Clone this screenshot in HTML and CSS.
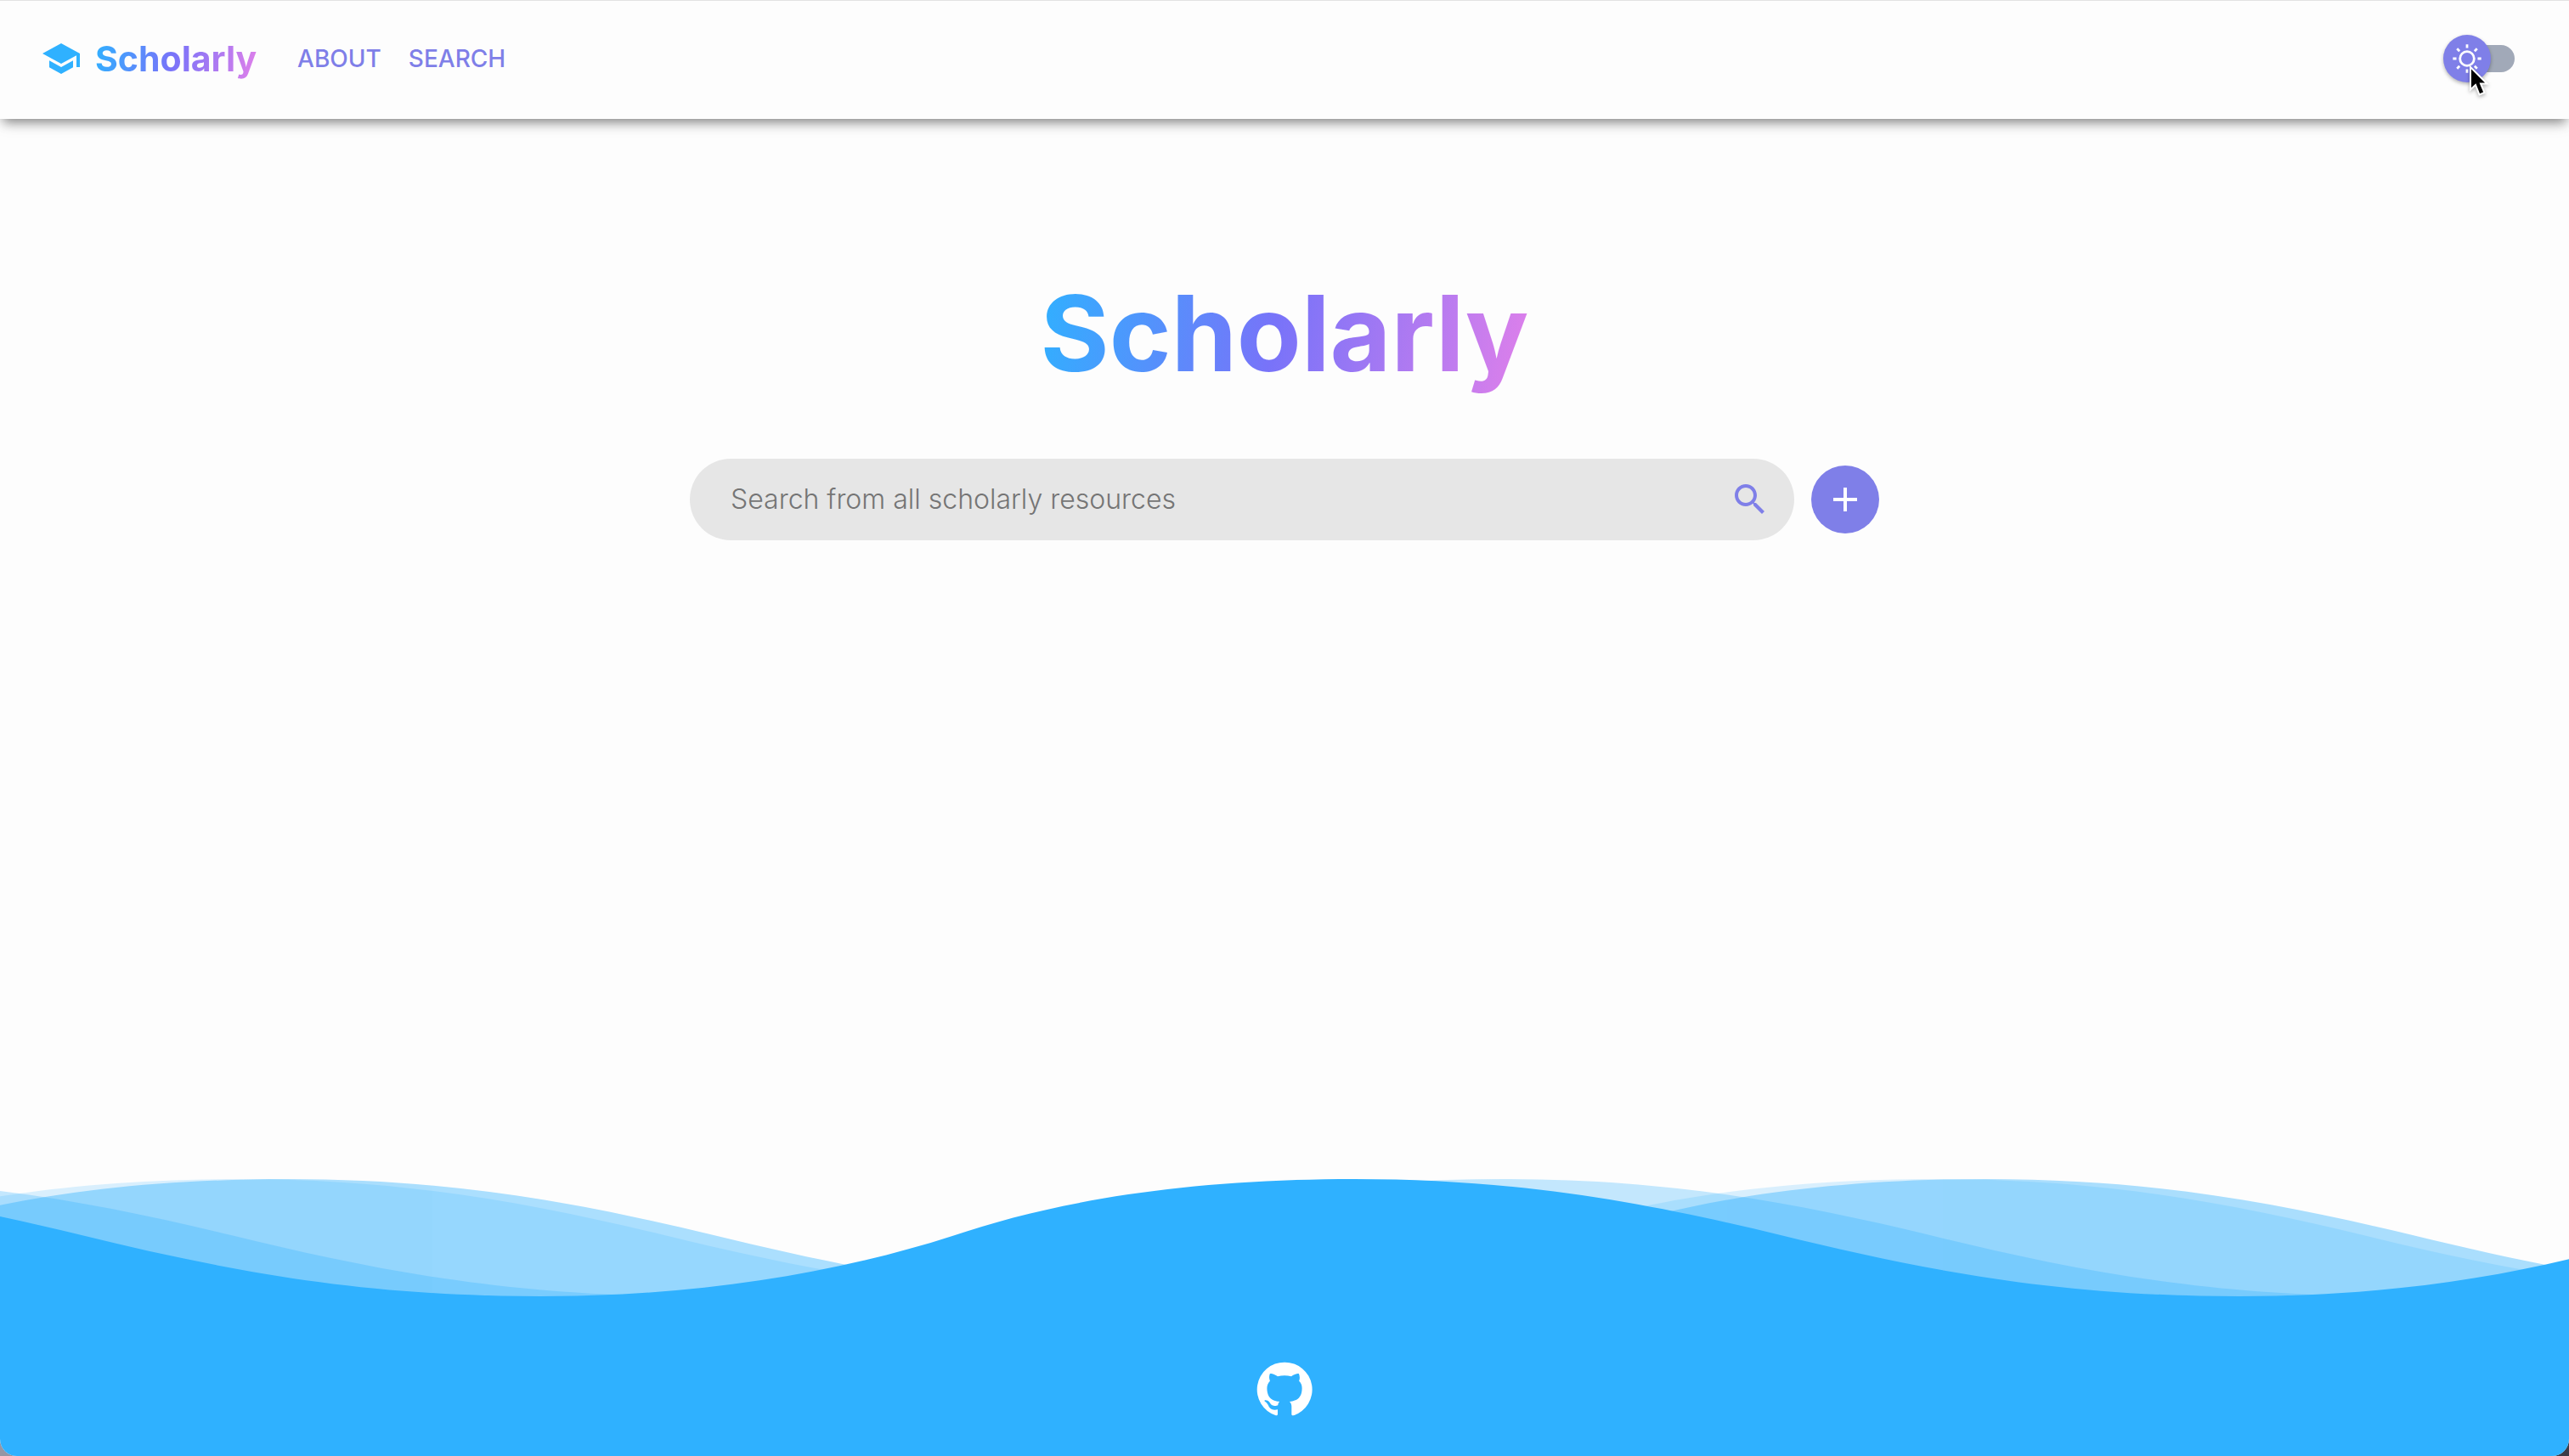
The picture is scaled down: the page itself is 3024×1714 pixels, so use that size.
FILE: index.html
```html
<!DOCTYPE html>
<html lang="en">
<head>
  <meta charset="utf-8">
  <meta name="viewport" content="width=device-width, initial-scale=1">
  <title>Scholarly</title>
  <link rel="stylesheet" href="styles.css">
</head>
<body>
  <div class="page">
    <header class="header">
      <a class="brand" href="#">
        <svg class="icon" viewBox="0 0 24 24" aria-hidden="true"><path d="M5 13.18v4L12 21l7-3.82v-4L12 17l-7-3.82zM12 3L1 9l11 6 9-4.91V17h2V9L12 3z"/></svg>
        <span class="brand-name gradient-text">Scholarly</span>
      </a>
      <nav class="nav">
        <a href="#about">ABOUT</a>
        <a href="#search">SEARCH</a>
      </nav>
      <label class="theme-switch">
        <input class="theme-input" type="checkbox" role="switch" aria-label="Dark mode">
        <span class="theme-thumb">
          <svg class="sun" viewBox="0 0 20 20" aria-hidden="true"><path d="M9.305 1.667V3.75h1.389V1.667h-1.39zm-4.707 1.95l-.982.982L5.09 6.072l.982-.982-1.473-1.473zm10.802 0L13.927 5.09l.982.982 1.473-1.473-.982-.982zM10 5.139a4.872 4.872 0 00-4.862 4.86A4.872 4.872 0 0010 14.862 4.872 4.872 0 0014.86 10 4.872 4.872 0 0010 5.139zm0 1.389A3.462 3.462 0 0113.471 10a3.462 3.462 0 01-3.473 3.472A3.462 3.462 0 016.527 10 3.462 3.462 0 0110 6.528zM1.665 9.305v1.39h2.083v-1.39H1.666zm14.583 0v1.39h2.084v-1.39h-2.084zM5.09 13.928L3.616 15.4l.982.982 1.473-1.473-.982-.982zm9.82 0l-.982.982 1.473 1.473.982-.982-1.473-1.473zM9.305 16.25v2.083h1.389V16.25h-1.39z"/></svg>
        </span>
        <svg class="pointer" viewBox="0 0 24 38" aria-hidden="true"><path d="M2 2v26.500l6-5.500 4.500 11.500 6-2.500-4.500-10.500h7.500z"/></svg>
      </label>
    </header>

    <main class="main">
      <h1 class="title gradient-text">Scholarly</h1>
      <form class="search-row">
        <div class="search-box">
          <input class="search-input" type="text" placeholder="Search from all scholarly resources" aria-label="Search from all scholarly resources">
          <button class="search-button" type="button" aria-label="Search">
            <svg class="icon" viewBox="0 0 24 24" aria-hidden="true"><path d="M15.500 14h-.79l-.28-.27C15.410 12.590 16 11.110 16 9.500 16 5.910 13.090 3 9.500 3S3 5.910 3 9.500 5.910 16 9.500 16c1.610 0 3.090-.59 4.230-1.570l.27.28v.79l5 4.990L20.490 19l-4.990-5zm-6 0C7.010 14 5 11.990 5 9.500S7.010 5 9.500 5 14 7.010 14 9.500 11.990 14 9.500 14z"/></svg>
          </button>
        </div>
        <button class="add-button" type="button" aria-label="Add filter">
          <svg class="icon" viewBox="0 0 24 24" aria-hidden="true"><path d="M19 13h-6v6h-2v-6H5v-2h6V5h2v6h6v2z"/></svg>
        </button>
      </form>
    </main>

    <footer class="footer">
      <svg class="waves" viewBox="0 0 3024 140" preserveAspectRatio="none" aria-hidden="true">
        <defs>
          <path id="wave" d="M0 0C202 0 352 30 502 66C662 105 822 138 1042 138C1222 138 1387 112 1527 67C1647 26 1802 0 2000 0V141H0z"/>
          <g id="swell"><use href="#wave" x="-4000"/><use href="#wave" x="-2000"/><use href="#wave"/><use href="#wave" x="2000"/></g>
        </defs>
        <use class="wave wave-faint" href="#swell" x="280"/>
        <use class="wave wave-light" href="#swell" x="-230"/>
        <use class="wave wave-soft" href="#swell" x="338"/>
        <use class="wave" href="#swell" x="1594"/>
      </svg>
      <div class="footer-body">
        <a class="github" href="#github" aria-label="GitHub">
          <svg class="github-icon" viewBox="0 0 24 24" aria-hidden="true"><path d="M12 1.270a11 11 0 00-3.480 21.460c.55.09.73-.28.73-.55v-1.840c-3.030.64-3.670-1.460-3.670-1.460-.55-1.290-1.280-1.650-1.280-1.650-.92-.65.1-.65.1-.65 1.100 0 1.730 1.100 1.730 1.100.92 1.650 2.570 1.200 3.210.92a2 2 0 01.64-1.470c-2.470-.27-5.040-1.190-5.040-5.500 0-1.100.46-2.100 1.200-2.840a3.760 3.760 0 010-2.930s.91-.28 3.110 1.100c1.800-.49 3.700-.49 5.500 0 2.100-1.380 3.020-1.100 3.020-1.100a3.760 3.760 0 01.1 2.930c.83.740 1.200 1.740 1.200 2.940 0 4.210-2.570 5.130-5.040 5.400.45.370.82.920.82 2.020v3.030c0 .27.1.64.73.55A11 11 0 0012 1.270"/></svg>
        </a>
      </div>
    </footer>
  </div>
</body>
</html>
```
FILE: styles.css
```css
:root {
  --sky: #2fb1ff;
  --violet: #7f7fe8;
  --paper: #fdfdfd;
}

* {
  box-sizing: border-box;
}

html {
  background: linear-gradient(90deg, #9696a4, #3c3c48);
}

body {
  margin: 0;
  font-family: Inter, "Open Sans", sans-serif;
}

.page {
  display: flex;
  flex-direction: column;
  min-height: 100vh;
  background: var(--paper);
  border-radius: 0 0 20px 20px;
  overflow: hidden;
}

.icon {
  display: block;
  width: 48px;
  height: 48px;
  fill: currentColor;
}

.gradient-text {
  background: linear-gradient(100deg, #2fb1ff, #7873f9 48%, #e080ea);
  background-clip: text;
  -webkit-background-clip: text;
  color: transparent;
}

.header {
  display: flex;
  align-items: center;
  height: 140px;
  padding: 0 64px 4px 48px;
  border-top: 1px solid #e2e2e2;
  background: var(--paper);
  box-shadow: 0 8px 12px -4px rgba(0, 0, 0, 0.42), 0 4px 20px rgba(0, 0, 0, 0.1);
}

.brand {
  display: flex;
  align-items: center;
  gap: 16px;
  color: var(--sky);
  text-decoration: none;
}

.brand-name {
  font-size: 41px;
  line-height: 56px;
  font-weight: 700;
}

.nav {
  display: flex;
  gap: 32px;
  margin-left: 48px;
}

.nav a {
  color: var(--violet);
  font-size: 28px;
  line-height: 40px;
  font-weight: 500;
  text-decoration: none;
}

.theme-switch {
  position: relative;
  display: flex;
  align-items: center;
  width: 84px;
  height: 56px;
  margin-left: auto;
}

.theme-input {
  appearance: none;
  width: 80px;
  height: 32px;
  margin: 0 0 0 4px;
  border-radius: 16px;
  background: #a1a9b8;
}

.theme-thumb {
  position: absolute;
  left: 0;
  top: 0;
  display: flex;
  align-items: center;
  justify-content: center;
  width: 56px;
  height: 56px;
  border-radius: 50%;
  background: var(--violet);
  box-shadow: 0 2px 4px rgba(0, 0, 0, 0.3);
}

.sun {
  width: 40px;
  height: 40px;
  fill: #fff;
}

.pointer {
  position: absolute;
  left: 30px;
  top: 36px;
  width: 24px;
  height: 38px;
  fill: #000;
  stroke: #fff;
  stroke-width: 2;
  filter: drop-shadow(0 2px 2px rgba(0, 0, 0, 0.3));
}

.main {
  display: flex;
  flex: 1;
  flex-direction: column;
  align-items: center;
  gap: 68px;
  padding: 172px 48px 48px;
}

.title {
  margin: 0;
  font-size: 124px;
  line-height: 160px;
  font-weight: 700;
}

.search-row {
  display: flex;
  align-items: center;
  gap: 20px;
  width: 100%;
  max-width: 1400px;
}

.search-box {
  display: flex;
  flex: 1;
  align-items: center;
  height: 96px;
  padding: 0 28px 0 48px;
  border-radius: 48px;
  background: #e6e6e6;
}

.search-input {
  flex: 1;
  min-width: 0;
  padding: 0;
  border: 0;
  outline: 0;
  background: none;
  color: #333;
  font-family: inherit;
  font-size: 32px;
  line-height: 48px;
  font-weight: 300;
}

.search-input::placeholder {
  color: #757575;
  opacity: 1;
}

.search-button {
  padding: 0;
  border: 0;
  background: none;
  color: var(--violet);
}

.add-button {
  display: flex;
  align-items: center;
  justify-content: center;
  width: 80px;
  height: 80px;
  padding: 0;
  border: 0;
  border-radius: 50%;
  background: var(--violet);
  color: #fff;
}

.waves {
  display: block;
  width: 100%;
  height: 140px;
}

.wave {
  fill: var(--sky);
}

.wave-light {
  opacity: 0.28;
}

.wave-soft {
  opacity: 0.4;
}

.wave-faint {
  opacity: 0.17;
}

.footer-body {
  display: flex;
  justify-content: center;
  height: 186px;
  padding-top: 72px;
  background: var(--sky);
}

.github-icon {
  display: block;
  width: 70px;
  height: 70px;
  fill: #fff;
}
```
